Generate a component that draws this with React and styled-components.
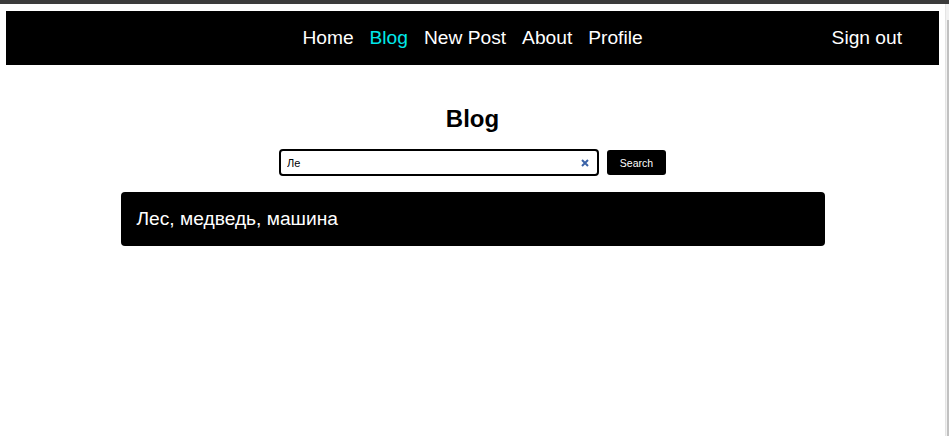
import React from "react";
import styled, { createGlobalStyle } from "styled-components";

const Global = createGlobalStyle`
  html, body { margin: 0; padding: 0; background: #fff; }
  body { font-family: "Liberation Sans", Arial, sans-serif; }
  * { box-sizing: border-box; }
`;

const Frame = styled.div`
  display: flex;
  flex-direction: column;
  height: 100vh;
  overflow: hidden;
`;

const TopStrip = styled.div`
  height: 4px;
  background: #3b3b3b;
  flex: none;
`;

const Viewport = styled.div`
  flex: 1;
  display: flex;
  min-height: 0;
`;

const Content = styled.div`
  flex: 1;
  padding: 7px 6px 0 6px;
`;

const Scrollbar = styled.div`
  width: 4px;
  flex: none;
  display: flex;
  justify-content: flex-end;
  background: #f1f1f1;
  border-left: 1px solid #e4e4e4;
  padding-top: 16px;
`;

const Thumb = styled.div`
  width: 2px;
  height: 100%;
  background: #c1c1c1;
`;

const Nav = styled.nav`
  height: 54px;
  background: #000;
  display: grid;
  grid-template-columns: 1fr auto 1fr;
  align-items: center;
`;

const Links = styled.div`
  grid-column: 2;
  display: flex;
  gap: 16px;
`;

const NavLink = styled.a`
  font-size: 19.2px;
  color: ${(p) => (p.$active ? "#00e8ea" : "#fff")};
  text-decoration: none;
  cursor: pointer;
`;

const SignOut = styled(NavLink)`
  grid-column: 3;
  justify-self: end;
  margin-right: 37px;
`;

const Main = styled.main`
  display: flex;
  flex-direction: column;
  align-items: center;
`;

const Title = styled.h2`
  margin: 40px 0 0;
  font-size: 24px;
  line-height: 28px;
  font-weight: 700;
  color: #000;
`;

const SearchRow = styled.form`
  margin-top: 16px;
  display: flex;
  align-items: center;
  gap: 8px;
`;

const SearchBox = styled.div`
  width: 320px;
  height: 27px;
  border: 2px solid #000;
  border-radius: 4px;
  display: flex;
  align-items: center;
  padding: 0 8px 0 6px;
  background: #fff;
`;

const SearchInput = styled.input`
  flex: 1;
  border: none;
  outline: none;
  padding: 0;
  font-family: "Liberation Sans", Arial, sans-serif;
  font-size: 11px;
  color: #000;
  background: transparent;
`;

const Clear = styled.span`
  display: flex;
  width: 8px;
  height: 8px;
`;

const SearchButton = styled.button`
  width: 59px;
  height: 25px;
  border: none;
  border-radius: 3px;
  background: #000;
  color: #fff;
  font-family: "Liberation Sans", Arial, sans-serif;
  font-size: 10.5px;
  padding: 0;
  cursor: pointer;
`;

const Card = styled.div`
  margin-top: 16px;
  width: 704px;
  height: 54px;
  background: #000;
  border-radius: 4px;
  display: flex;
  align-items: center;
  padding: 0 16px;
  color: #fff;
  font-size: 19.2px;
`;

export default function App() {
  return (
    <Frame>
      <Global />
      <TopStrip />
      <Viewport>
        <Content>
          <Nav>
            <Links>
              <NavLink>Home</NavLink>
              <NavLink $active>Blog</NavLink>
              <NavLink>New Post</NavLink>
              <NavLink>About</NavLink>
              <NavLink>Profile</NavLink>
            </Links>
            <SignOut>Sign out</SignOut>
          </Nav>
          <Main>
            <Title>Blog</Title>
            <SearchRow onSubmit={(e) => e.preventDefault()}>
              <SearchBox>
                <SearchInput defaultValue="Ле" />
                <Clear>
                  <svg width="8" height="8" viewBox="0 0 8 8">
                    <path
                      d="M1 1 L7 7 M7 1 L1 7"
                      stroke="#3b63a8"
                      strokeWidth="2"
                      strokeLinecap="butt"
                    />
                  </svg>
                </Clear>
              </SearchBox>
              <SearchButton type="submit">Search</SearchButton>
            </SearchRow>
            <Card>Лес, медведь, машина</Card>
          </Main>
        </Content>
        <Scrollbar>
          <Thumb />
        </Scrollbar>
      </Viewport>
    </Frame>
  );
}
